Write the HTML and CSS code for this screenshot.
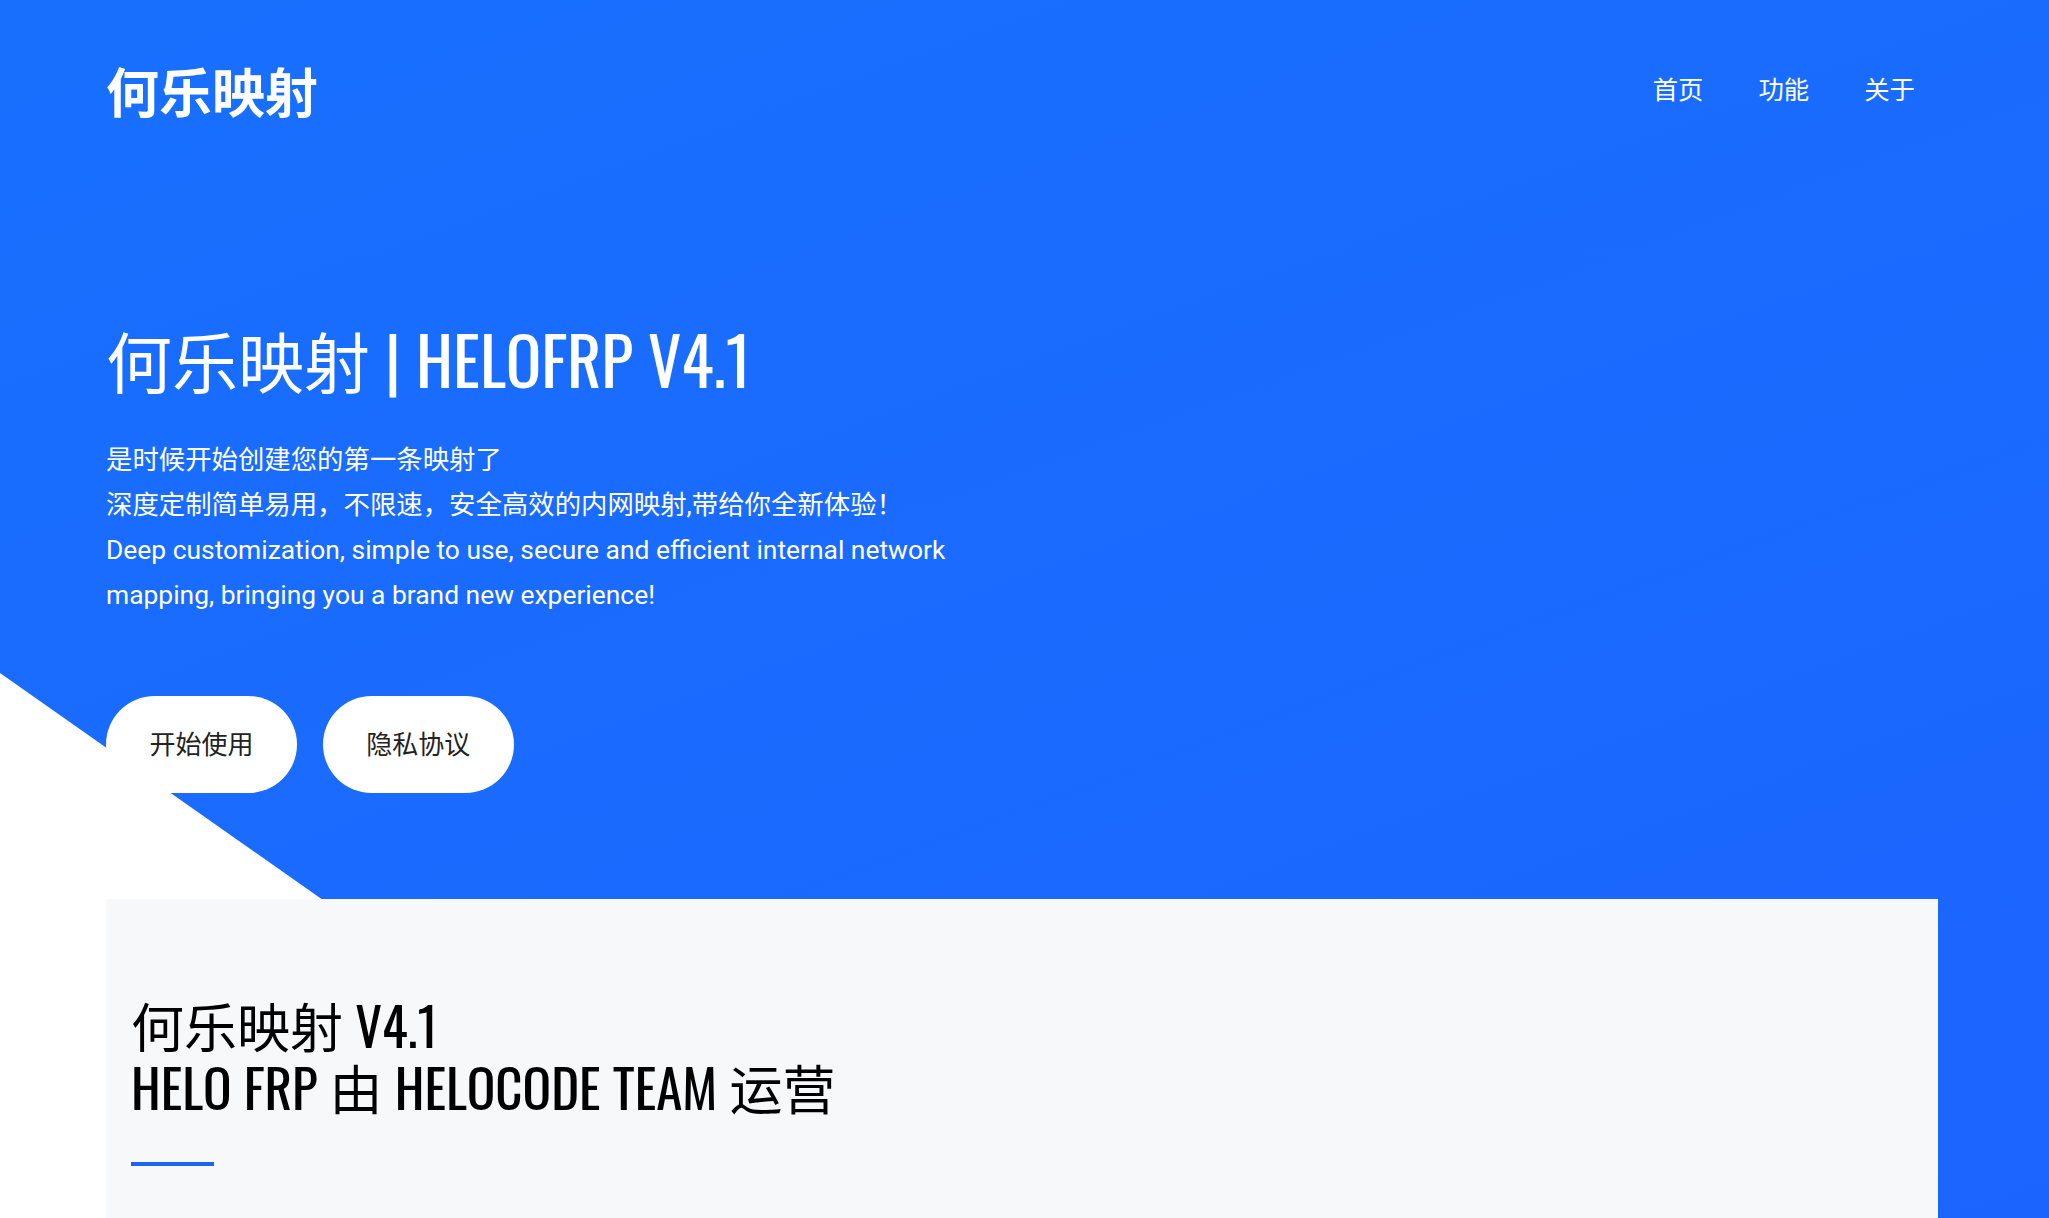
FILE: index.html
```html
<!DOCTYPE html>
<html lang="zh-CN">
<head>
<meta charset="utf-8">
<title>何乐映射 | HELOFRP V4.1</title>
<link rel="stylesheet" href="styles.css">
</head>
<body>
<div class="page">
  <div class="hero-bg"></div>
  <header class="topbar">
    <a class="logo" href="#">何乐映射</a>
    <nav class="nav">
      <a href="#">首页</a>
      <a href="#">功能</a>
      <a href="#">关于</a>
    </nav>
  </header>
  <section class="hero">
    <h1 class="hero-title">何乐映射 | HELOFRP V4.1</h1>
    <p class="hero-text">是时候开始创建您的第一条映射了<br>深度定制简单易用，不限速，安全高效的内网映射,带给你全新体验！<br>Deep customization, simple to use, secure and efficient internal network mapping, bringing you a brand new experience!</p>
    <div class="hero-actions">
      <a class="btn" href="#">开始使用</a>
      <a class="btn" href="#">隐私协议</a>
    </div>
  </section>
  <section class="card">
    <h2 class="card-title">何乐映射 V4.1<br>HELO FRP 由 HELOCODE TEAM 运营</h2>
    <div class="card-line"></div>
  </section>
</div>
</body>
</html>
```
FILE: styles.css
```css
html, body {
  margin: 0;
  padding: 0;
}
body {
  background: #ffffff;
  font-family: Roboto, "Noto Sans CJK SC", sans-serif;
  overflow: hidden;
}
a {
  text-decoration: none;
  color: inherit;
}
.page {
  position: relative;
  min-height: 1218px;
}
.hero-bg {
  position: absolute;
  left: 0;
  top: 0;
  right: 0;
  height: 1400px;
  background: linear-gradient(160deg, #186ffe 0%, #1a6afe 50%, #1d63ff 100%);
  clip-path: polygon(0 0, 100% 0, 100% 100%, 1034px 100%, 0 673px);
  z-index: 0;
}
.topbar {
  position: relative;
  z-index: 1;
  height: 180px;
  display: flex;
  align-items: center;
  justify-content: space-between;
  padding: 0 134px 0 106px;
}
.logo {
  font-family: "Noto Sans CJK SC", sans-serif;
  font-weight: 700;
  font-size: 53px;
  line-height: 60px;
  color: #ffffff;
}
.nav {
  display: flex;
  gap: 55px;
  margin-top: -5px;
}
.nav a {
  font-family: "Noto Sans CJK SC", sans-serif;
  font-size: 25.4px;
  line-height: 30px;
  color: #ffffff;
}
.hero {
  position: relative;
  z-index: 1;
  padding: 138px 106px 0;
}
.hero-title {
  margin: 0;
  font-family: Oswald, "Noto Sans CJK SC", sans-serif;
  font-weight: 400;
  font-size: 66px;
  line-height: 80px;
  color: #ffffff;
}
.hero-text {
  margin: 40px 0 0;
  width: 900px;
  font-size: 26.4px;
  line-height: 45px;
  color: #ffffff;
}
.hero-actions {
  display: flex;
  gap: 26px;
  margin-top: 78px;
}
.btn {
  display: block;
  background: #ffffff;
  color: #222222;
  font-family: "Noto Sans CJK SC", sans-serif;
  font-size: 26px;
  line-height: 29px;
  padding: 32px 43.4px 36px;
  border-radius: 50px;
}
.card {
  position: relative;
  z-index: 1;
  margin: 106px 111px 0 106px;
  background: #f7f8fa;
  padding: 94px 25px 120px;
}
.card-title {
  margin: 0;
  font-family: Oswald, "Noto Sans CJK SC", sans-serif;
  font-weight: 400;
  font-size: 53px;
  line-height: 62px;
  color: #000000;
}
.card-line {
  width: 83px;
  height: 4px;
  margin-top: 45px;
  background: #1c63ee;
}
```
